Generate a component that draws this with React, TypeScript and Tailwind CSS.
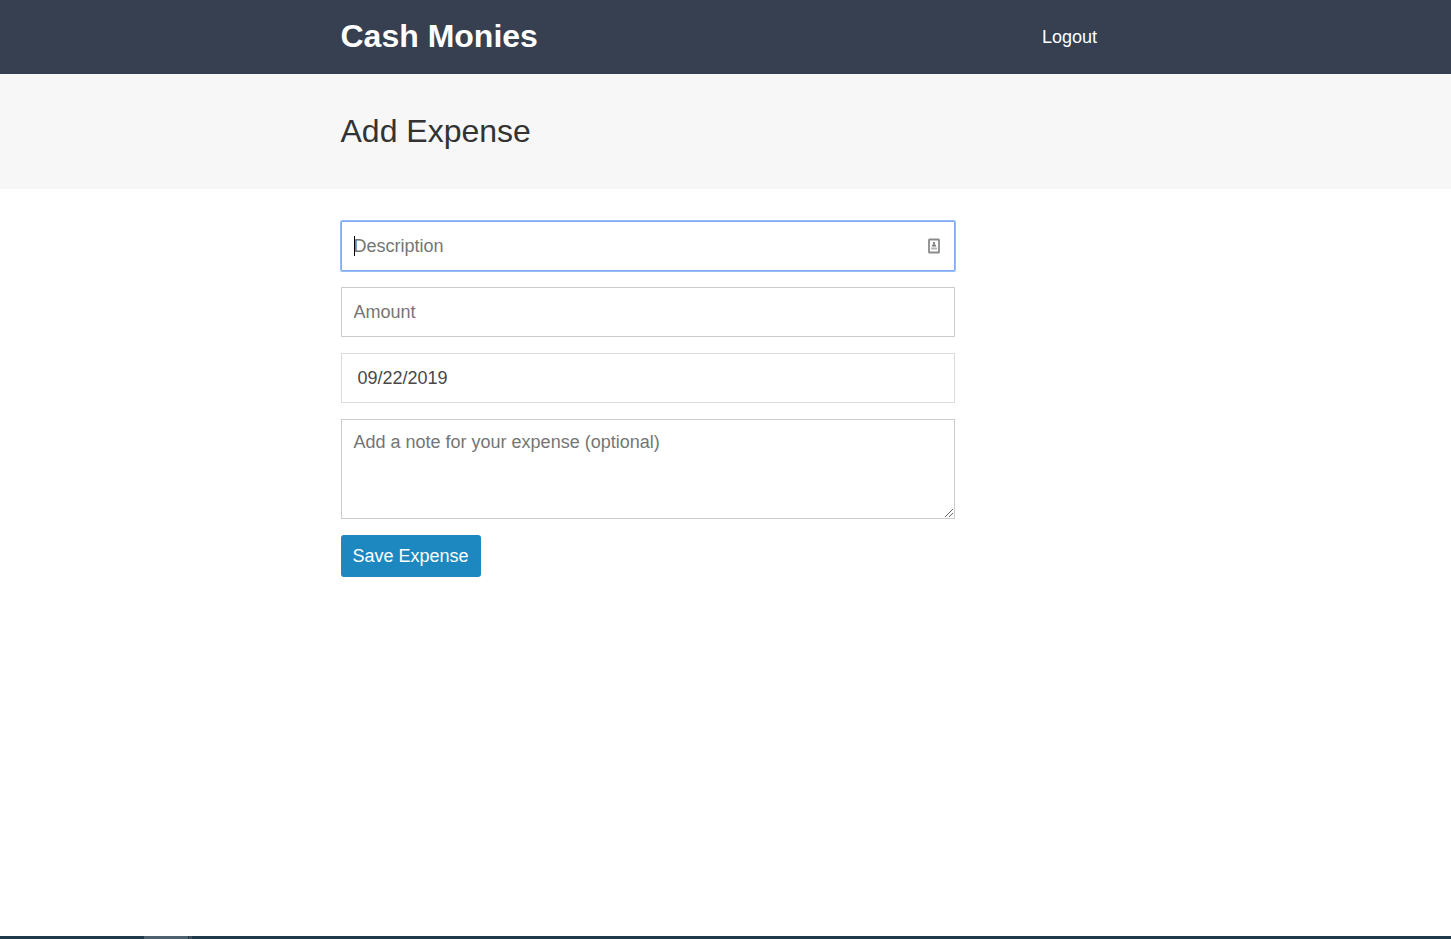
import React from 'react';

function Header() {
  return (
    <header className="h-[74px] bg-[#364051]">
      <div className="mx-auto flex h-full w-[770px] items-center justify-between pb-0.5">
        <h1 className="h-10 text-[32px] leading-10 font-bold text-white">Cash Monies</h1>
        <button type="button" className="pt-0.5 pr-[13.5px] text-[18px] leading-5 text-white">
          Logout
        </button>
      </div>
    </header>
  );
}

function ContactCardIcon() {
  return (
    <svg width="12" height="16" viewBox="0 0 12 16" className="absolute top-[17px] right-[15px]" fill="none">
      <rect x="1" y="1.5" width="10" height="13" rx="0.6" stroke="#8b8b8b" strokeWidth="1.8" />
      <rect x="5" y="4" width="2" height="2" fill="#888" />
      <path d="M4 8.5V7.2L5 6.2h2l1 1v1.3z" fill="#777" />
      <path d="M3 10.5h6" stroke="#b5b5b5" strokeWidth="2" />
    </svg>
  );
}

function ExpenseForm() {
  return (
    <form className="mx-auto flex w-[769px] flex-col items-start gap-4 pt-8">
      <div className="relative w-[614px]">
        <input
          type="text"
          placeholder="Description"
          className="block h-[50px] w-full rounded-[1px] border border-[#7fa8f0] pr-3 pl-[11.5px] text-[18px] text-[#333] ring-1 ring-[#9abdfa] outline-none placeholder:text-[#757575]"
        />
        <span className="absolute top-[15px] left-[13px] h-5 w-px bg-black" />
        <ContactCardIcon />
      </div>
      <input
        type="text"
        placeholder="Amount"
        className="block h-[50px] w-[614px] border border-[#cacccd] pr-3 pl-[11.5px] text-[18px] text-[#333] outline-none placeholder:text-[#757575]"
      />
      <input
        type="text"
        defaultValue="09/22/2019"
        className="block h-[50px] w-[614px] border border-[#dbdbdb] pr-4 pl-[15.5px] text-[18px] text-[#484848] outline-none"
      />
      <div className="relative h-[100px] w-[614px]">
        <textarea
          placeholder="Add a note for your expense (optional)"
          className="block h-full w-full resize-none border border-[#cacccd] py-3 pr-3 pl-[11.5px] text-[18px] leading-5 text-[#333] outline-none placeholder:text-[#757575]"
        />
        <svg width="10" height="10" viewBox="0 0 10 10" className="absolute right-px bottom-px" stroke="#666" fill="none">
          <path d="M1 9L9 1M5 9L9 5" strokeWidth="1" />
        </svg>
      </div>
      <button
        type="button"
        className="h-[42px] w-[140px] rounded-[3px] bg-[#1c88bf] pr-px text-[18px] leading-5 text-white"
      >
        Save Expense
      </button>
    </form>
  );
}

export default function App() {
  return (
    <div className="flex h-[939px] flex-col overflow-hidden bg-white font-['Liberation_Sans',Arial,sans-serif] text-[#333]">
      <Header />
      <div className="h-[115px] bg-[#f7f7f7] pt-[37px]">
        <h2 className="mx-auto w-[770px] text-[32px] leading-10">Add Expense</h2>
      </div>
      <main className="flex-1">
        <ExpenseForm />
      </main>
      <footer className="flex h-[3px] bg-[#20394a]">
        <div className="ml-36 h-full w-[44px] bg-[#4d616e]" />
        <div className="ml-px h-full w-[3px] bg-[#3e4f5b]" />
      </footer>
    </div>
  );
}
